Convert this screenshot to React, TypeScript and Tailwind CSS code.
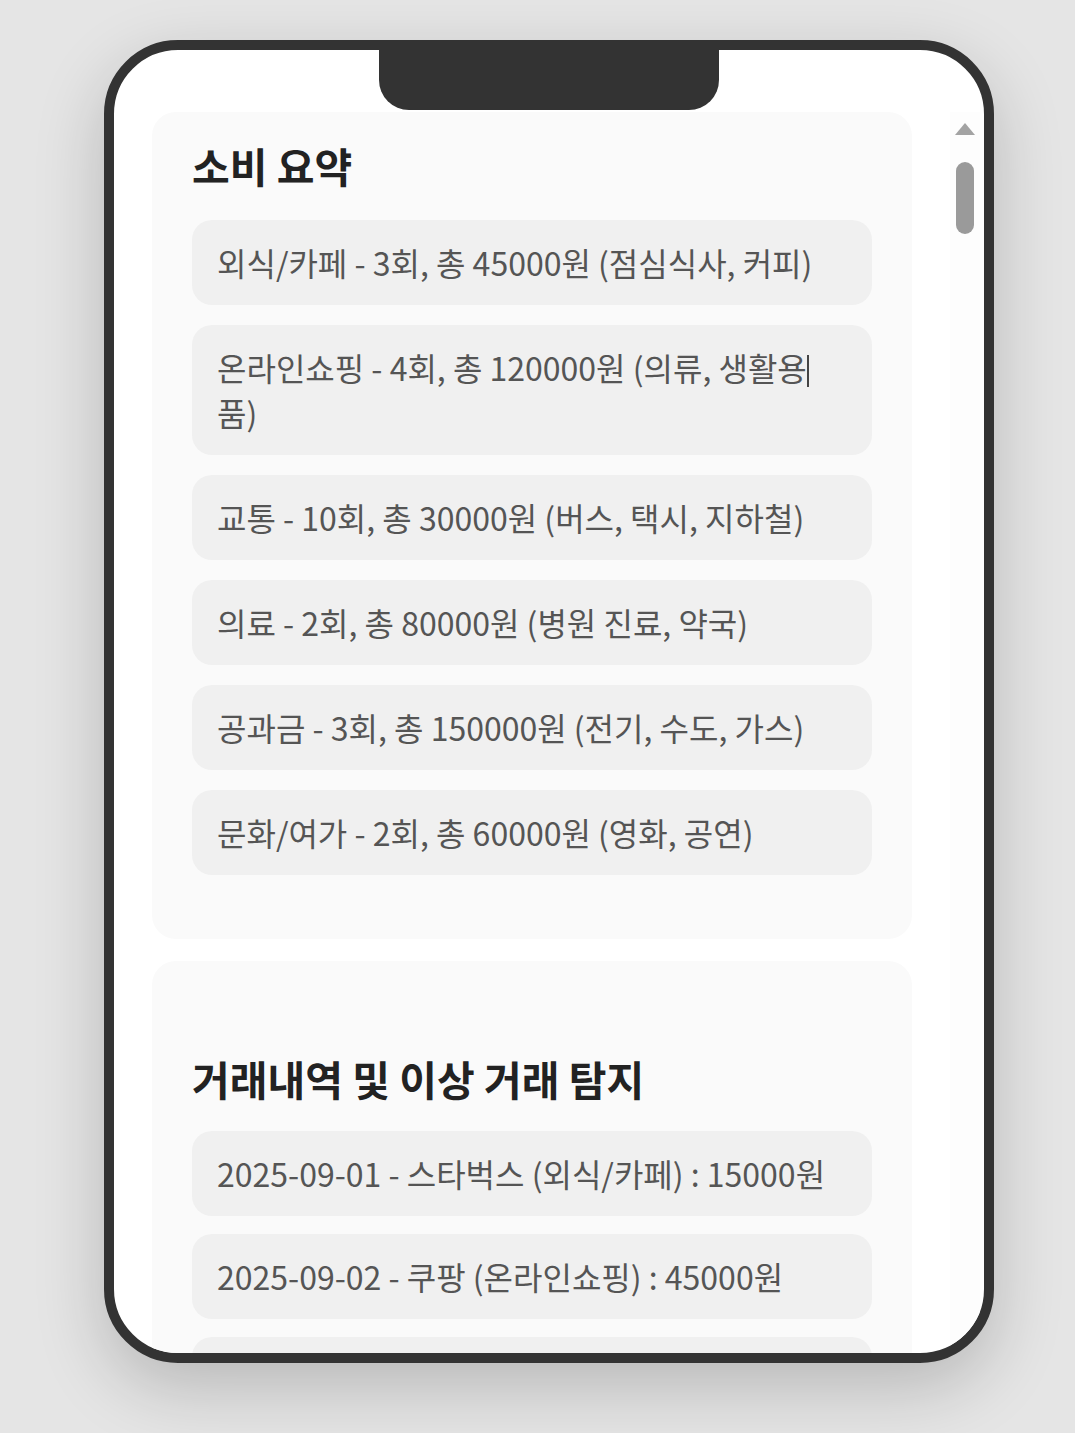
import React from 'react';

const summary = [
  '외식/카페 - 3회, 총 45000원 (점심식사, 커피)',
  '온라인쇼핑 - 4회, 총 120000원 (의류, 생활용품)',
  '교통 - 10회, 총 30000원 (버스, 택시, 지하철)',
  '의료 - 2회, 총 80000원 (병원 진료, 약국)',
  '공과금 - 3회, 총 150000원 (전기, 수도, 가스)',
  '문화/여가 - 2회, 총 60000원 (영화, 공연)',
];

const transactions = [
  '2025-09-01 - 스타벅스 (외식/카페) : 15000원',
  '2025-09-02 - 쿠팡 (온라인쇼핑) : 45000원',
];

const Item: React.FC<{ children?: React.ReactNode }> = ({ children }) => (
  <li className="rounded-[20px] bg-[#f0f0f0] px-[25px] py-[20px] text-[32px] leading-[45px] text-[#555]">
    {children}
  </li>
);

export default function App() {
  return (
    <div
      className="min-h-[1433px] w-full bg-[#e5e5e5] pl-[104px] pt-[40px]"
      style={{ fontFamily: '"Noto Sans CJK KR", "Noto Sans", sans-serif' }}
    >
      <div className="relative h-[1323px] w-[890px] overflow-hidden rounded-[74px] border-[10px] border-[#333] bg-white shadow-[0_24px_70px_rgba(0,0,0,0.2)]">
        {/* notch */}
        <div className="absolute left-1/2 top-0 z-10 h-[60px] w-[340px] -translate-x-1/2 rounded-b-[30px] bg-[#333]" />

        <div className="flex h-full pt-[62px]">
          <div className="flex-1 overflow-hidden px-[38px]">
            <section className="rounded-[24px] bg-[#fafafa] px-[40px] pb-[64px] pt-[26px]">
              <h2 className="mb-[28px] text-[41px] font-bold leading-[54px] text-[#222]">소비 요약</h2>
              <ul className="flex flex-col gap-[20px]">
                {summary.map((s, i) =>
                  i === 1 ? (
                    <Item key={s}>
                      온라인쇼핑 - 4회, 총 120000원 (의류, 생활용
                      <span className="inline-block h-[32px] w-[2px] bg-[#444] align-[-6px]" />
                      품)
                    </Item>
                  ) : (
                    <Item key={s}>{s}</Item>
                  ),
                )}
              </ul>
            </section>

            <section className="mt-[22px] rounded-[24px] bg-[#fafafa] px-[40px] pb-[40px] pt-[90px]">
              <h2 className="mb-[26px] text-[41px] font-bold leading-[54px] text-[#222]">거래내역 및 이상 거래 탐지</h2>
              <ul className="flex flex-col gap-[18px]">
                {transactions.map((t) => (
                  <Item key={t}>{t}</Item>
                ))}
                {/* next row, scrolled below the screen edge */}
                <li className="h-[85px] rounded-[20px] bg-[#f0f0f0]" />
              </ul>
            </section>
          </div>

          {/* scrollbar */}
          <div className="mr-[4px] flex w-[30px] flex-col items-center bg-[#fdfdfd] pt-[10px]">
            <svg width="22" height="14" viewBox="0 0 22 14" className="text-[#a3a3a3]">
              <path d="M11 1 L21 13 L1 13 Z" fill="currentColor" />
            </svg>
            <div className="mt-[26px] h-[72px] w-[18px] rounded-full bg-[#9a9a9a]" />
          </div>
        </div>
      </div>
    </div>
  );
}
